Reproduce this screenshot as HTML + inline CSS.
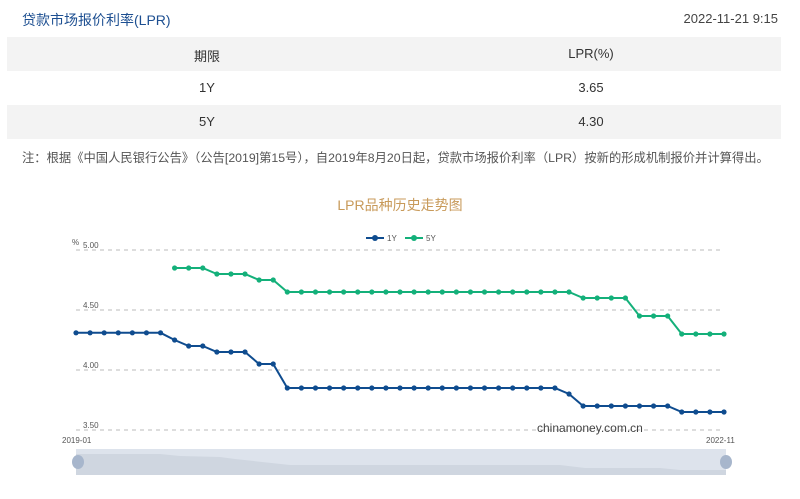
<!DOCTYPE html>
<html><head><meta charset="utf-8"><style>
body{margin:0;width:800px;height:499px;background:#fff;font-family:"Liberation Sans","Noto Sans CJK SC",sans-serif;position:relative;overflow:hidden}
.t{position:absolute;left:22px;top:10px;font-size:14px;color:#1d4f91}
.d{position:absolute;right:22px;top:11px;font-size:13px;color:#444}
.row{position:absolute;left:7px;width:774px;height:34px;font-size:13px;color:#333}
.row span{position:absolute;top:9px;transform:translateX(-50%)}
.n{position:absolute;left:22px;top:148px;font-size:12.3px;color:#555;white-space:nowrap}
.ct{position:absolute;left:0;width:800px;top:195px;text-align:center;font-size:14px;color:#c89a5a}
</style></head><body>
<div class="t">贷款市场报价利率(LPR)</div>
<div class="d">2022-11-21 9:15</div>
<div class="row" style="top:37px;background:#f3f3f3"><span style="left:200px">期限</span><span style="left:584px">LPR(%)</span></div>
<div class="row" style="top:71px;background:#fff"><span style="left:200px">1Y</span><span style="left:584px">3.65</span></div>
<div class="row" style="top:105px;background:#f3f3f3"><span style="left:200px">5Y</span><span style="left:584px">4.30</span></div>
<div class="n">注：根据《中国人民银行公告》（公告[2019]第15号），自2019年8月20日起，贷款市场报价利率（LPR）按新的形成机制报价并计算得出。</div>
<div class="ct">LPR品种历史走势图</div>
<svg id="s" width="800" height="499" style="position:absolute;left:0;top:0" font-family="Liberation Sans,sans-serif">
<g stroke="#bbb" stroke-dasharray="4,4" stroke-width="1">
<line x1="76" x2="724" y1="250" y2="250"/><line x1="76" x2="724" y1="310" y2="310"/><line x1="76" x2="724" y1="370" y2="370"/><line x1="76" x2="724" y1="430" y2="430"/></g>
<g font-size="8" fill="#555"><text x="72" y="245">%</text><text x="83" y="248">5.00</text><text x="83" y="308">4.50</text><text x="83" y="368">4.00</text><text x="83" y="428">3.50</text>
<text x="62" y="443">2019-01</text><text x="706" y="443">2022-11</text></g>
<text x="537" y="432" font-size="12" fill="#444">chinamoney.com.cn</text>
<g font-size="8" fill="#555"><line x1="366" x2="384" y1="238" y2="238" stroke="#0f4c8f" stroke-width="2"/><circle cx="375" cy="238" r="3" fill="#0f4c8f"/><text x="387" y="241">1Y</text>
<line x1="405" x2="423" y1="238" y2="238" stroke="#14b07a" stroke-width="2"/><circle cx="414" cy="238" r="3" fill="#14b07a"/><text x="426" y="241">5Y</text></g>
<rect x="76" y="449" width="650" height="26" fill="#dde3ec"/>
<path d="M76 454 L160 454 L180 456 L220 457 L235 459 L290 465 L560 465 L585 468 L660 468 L680 470 L726 470 L726 475 L76 475Z" fill="#cfd6e0"/>
<ellipse cx="78" cy="462" rx="6" ry="7" fill="#a7b6cc"/><ellipse cx="726" cy="462" rx="6" ry="7" fill="#a7b6cc"/>
<g id="g"></g>
</svg>
<script>
var a=[],b=[];for(var i=0;i<7;i++)a.push(4.31);a=a.concat([4.25,4.2,4.2,4.15,4.15,4.15,4.05,4.05]);while(a.length<35)a.push(3.85);a.push(3.8);while(a.length<43)a.push(3.7);while(a.length<47)a.push(3.65);
for(i=0;i<7;i++)b.push(null);b=b.concat([4.85,4.85,4.85,4.8,4.8,4.8,4.75,4.75]);while(b.length<36)b.push(4.65);b=b.concat([4.6,4.6,4.6,4.6,4.45,4.45,4.45,4.3,4.3,4.3,4.3]);
function X(i){return 76+i*648/46}function Y(v){return 250+(5-v)*120}
var h='';[[a,'#0f4c8f'],[b,'#14b07a']].forEach(function(s){var p='',c='';s[0].forEach(function(v,i){if(v==null)return;p+=(p?'L':'M')+X(i)+' '+Y(v);c+='<circle cx="'+X(i)+'" cy="'+Y(v)+'" r="2.6" fill="'+s[1]+'"/>';});h+='<path d="'+p+'" fill="none" stroke="'+s[1]+'" stroke-width="2"/>'+c;});
document.getElementById('g').innerHTML=h;
</script>
</body></html>
